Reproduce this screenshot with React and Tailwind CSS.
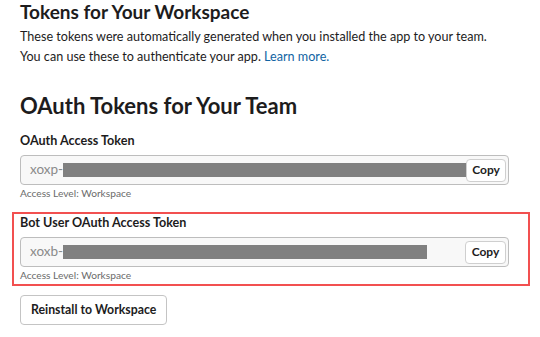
import React from "react";

const TokenField = ({ label, prefix, barWidth }) => (
  <div>
    <div className="text-[12.6px] font-bold leading-[18px] text-[#1d1c1d]">{label}</div>
    <div className="mt-[5px] flex h-[30px] items-center rounded-[4px] border border-[#bdbdbd] bg-[#f8f8f8] pl-[9px] pr-[2px]">
      <span className="text-[13.5px] leading-none text-[#8a8a8a]">{prefix}</span>
      <div className="flex flex-1 items-center">
        <div className="h-[14px] bg-[#808080]" style={{ width: barWidth }}></div>
      </div>
      <button className="h-[23px] w-[41px] rounded-[4px] border border-[#cfcfcf] bg-white text-[12px] font-bold text-[#1d1c1d]">
        Copy
      </button>
    </div>
    <div className="mt-[1px] text-[10.2px] leading-[14px] text-[#6b6b6b]">Access Level: Workspace</div>
  </div>
);

const App = () => {
  return (
    <div className="h-[337px] w-[540px] overflow-hidden bg-white pl-[20px] pr-[31px] font-['Lato',sans-serif] text-[#1d1c1d]">
      <h1 className="text-[19px] font-bold leading-[23px]">Tokens for Your Workspace</h1>
      <p className="mt-[4px] text-[12.6px] leading-[20px]">
        These tokens were automatically generated when you installed the app to your team.
        <br />
        You can use these to authenticate your app.{" "}
        <a className="text-[#1264a3]">Learn more.</a>
      </p>

      <h2 className="mt-[25px] text-[22px] font-bold leading-[28px]">OAuth Tokens for Your Team</h2>

      <div className="mt-[12px]">
        <TokenField label="OAuth Access Token" prefix="xoxp-" barWidth={403} />
      </div>

      <div className="-ml-[8px] -mr-[21px] mt-[12px] border-2 border-[#f25050] pb-[2px] pl-[6px] pr-[19px]">
        <TokenField label="Bot User OAuth Access Token" prefix="xoxb-" barWidth={364} />
      </div>

      <button className="mt-[9px] h-[30px] rounded-[4px] border border-[#c4c4c4] bg-white px-[10px] text-[12.3px] font-bold text-[#1d1c1d]">
        Reinstall to Workspace
      </button>
    </div>
  );
};

export default App;
